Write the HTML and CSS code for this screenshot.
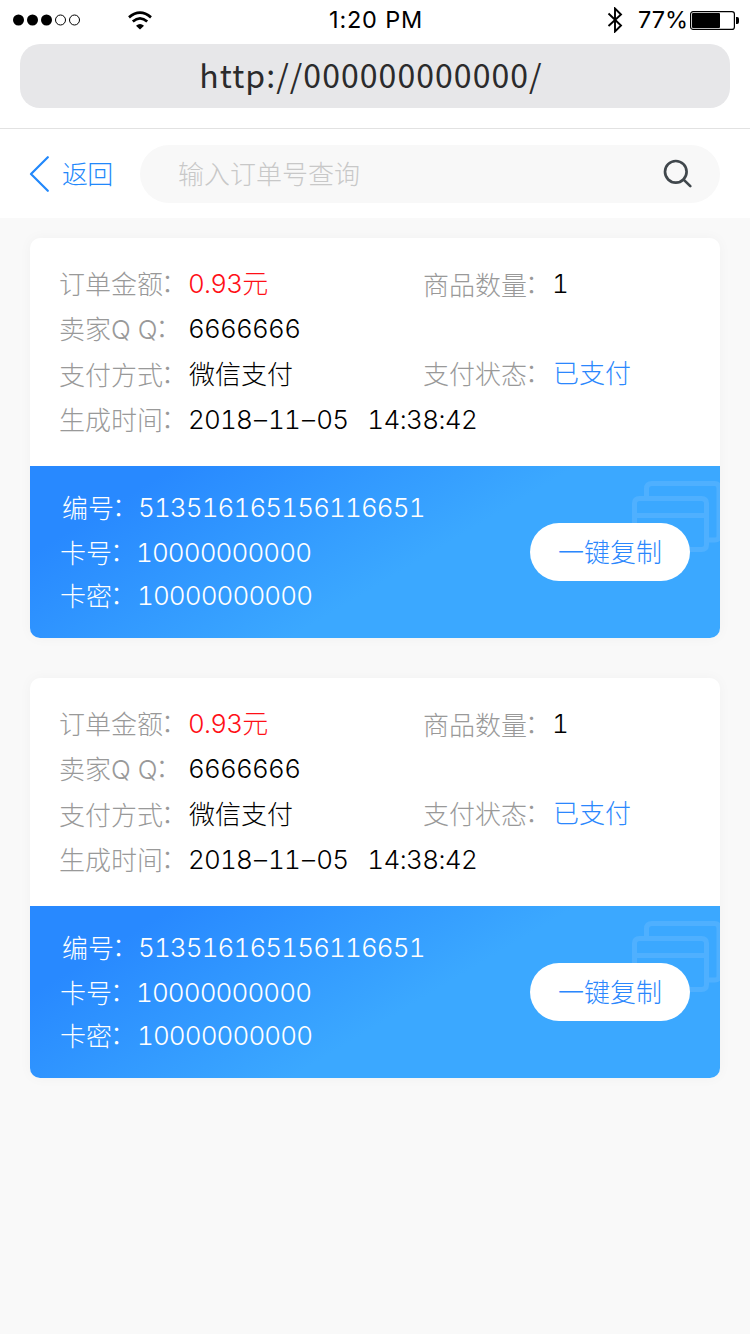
FILE: index.html
```html
<!DOCTYPE html>
<html lang="zh-CN">
<head>
<meta charset="utf-8">
<title>订单查询</title>
<link rel="stylesheet" href="styles.css">
</head>
<body>
<header class="status">
  <div class="status-left">
    <svg class="signal" viewBox="0 0 68 12"><circle cx="5.5" cy="6" r="5.5"/><circle cx="19.5" cy="6" r="5.5"/><circle cx="33.5" cy="6" r="5.5"/><g fill="none" stroke="#000"><circle cx="47.5" cy="6" r="5"/><circle cx="61.5" cy="6" r="5"/></g></svg>
    <svg class="wifi" viewBox="0 0 24 19"><path d="M8 14.7Q12 11.3 16 14.7L12 18.6Z"/><g fill="none" stroke="#000" stroke-width="2.7"><path d="M1 6.4Q12-3 23 6.4"/><path d="M4.8 10.6Q12 4.2 19.2 10.6"/></g></svg>
  </div>
  <div class="time">1:20 PM</div>
  <div class="status-right">
    <svg class="bluetooth" viewBox="0 0 16 26"><path d="M1.5 6.5 14 18.5 8 24.5V1.5L14 7.5 1.5 19" fill="none" stroke="#000" stroke-width="1.9"/></svg>
    <span class="percent">77%</span>
    <svg class="battery" viewBox="0 0 49 19"><rect x=".6" y=".6" width="43.8" height="17.8" rx="2.5" fill="none" stroke="#000" stroke-width="1.2"/><rect x="2" y="2" width="28" height="15" rx="1"/><path d="M46 6h1.2q1.8 0 1.8 2v3q0 2-1.8 2H46z"/></svg>
  </div>
</header>
<div class="address"><div class="url">http://000000000000/</div></div>
<nav class="nav">
  <a class="back"><svg class="chevron" viewBox="0 0 20 38"><path d="M18.8 2.2 2 19 18.8 35.8" fill="none" stroke="#2288fb" stroke-width="2.2" stroke-linecap="round" stroke-linejoin="round"/></svg><span>返回</span></a>
  <div class="search"><span>输入订单号查询</span><svg class="glass" viewBox="0 0 30 30"><g fill="none" stroke="#40474c" stroke-width="2.7" stroke-linecap="round"><circle cx="12.8" cy="12.8" r="10.8"/><path d="M20.6 20.6 27.3 27.1"/></g></svg></div>
</nav>
<main class="orders">
  <article class="card">
    <div class="info">
      <span class="label">订单金额<u>：</u></span><span class="value num red">0.93元</span><span class="label low">商品数量<u>：</u></span><span class="value num">1</span>
      <span class="label">卖家Q&nbsp;Q<u>：</u></span><span class="value num wide">6666666</span>
      <span class="label">支付方式<u>：</u></span><span class="value">微信支付</span><span class="label high">支付状态<u>：</u></span><span class="value blue high">已支付</span>
      <span class="label">生成时间<u>：</u></span><span class="value num wide">2018<i>–</i>11<i>–</i>05<span class="clock">14:38:42</span></span>
    </div>
    <div class="codes">
      <svg class="cards" viewBox="0 0 90 74"><g fill="none" stroke="#fff" stroke-opacity=".1" stroke-width="5"><path d="M16.5 17V10q0-5.5 5.5-5.5H85q4 0 4 5V57q0 4-4 4H79"/><path d="M9.5 19.5H71.5q5 0 5 5V65.5q0 5-5 5H9.5q-5 0-5-5V24.5q0-5 5-5ZM7 36.5H74"/></g></svg>
      <div class="code first"><span>编号<u>：</u></span><span class="num">513516165156116651</span></div>
      <div class="code second"><span>卡号<u>：</u></span><span class="num">10000000000</span></div>
      <div class="code last"><span>卡密<u>：</u></span><span class="num">10000000000</span></div>
      <button class="copy">一键复制</button>
    </div>
  </article>
  <article class="card">
    <div class="info">
      <span class="label">订单金额<u>：</u></span><span class="value num red">0.93元</span><span class="label low">商品数量<u>：</u></span><span class="value num">1</span>
      <span class="label">卖家Q&nbsp;Q<u>：</u></span><span class="value num wide">6666666</span>
      <span class="label">支付方式<u>：</u></span><span class="value">微信支付</span><span class="label high">支付状态<u>：</u></span><span class="value blue high">已支付</span>
      <span class="label">生成时间<u>：</u></span><span class="value num wide">2018<i>–</i>11<i>–</i>05<span class="clock">14:38:42</span></span>
    </div>
    <div class="codes">
      <svg class="cards" viewBox="0 0 90 74"><g fill="none" stroke="#fff" stroke-opacity=".1" stroke-width="5"><path d="M16.5 17V10q0-5.5 5.5-5.5H85q4 0 4 5V57q0 4-4 4H79"/><path d="M9.5 19.5H71.5q5 0 5 5V65.5q0 5-5 5H9.5q-5 0-5-5V24.5q0-5 5-5ZM7 36.5H74"/></g></svg>
      <div class="code first"><span>编号<u>：</u></span><span class="num">513516165156116651</span></div>
      <div class="code second"><span>卡号<u>：</u></span><span class="num">10000000000</span></div>
      <div class="code last"><span>卡密<u>：</u></span><span class="num">10000000000</span></div>
      <button class="copy">一键复制</button>
    </div>
  </article>
</main>
</body>
</html>
```
FILE: styles.css
```css
* { box-sizing: border-box; }
body { margin: 0; min-height: 1334px; background: #f9f9f9; font: 300 26px/45px Inter, "Noto Sans CJK SC", sans-serif; font-feature-settings: "tnum"; color: #000; white-space: nowrap; }
svg { display: block; flex: none; }
.status { display: grid; grid-template-columns: 1fr auto 1fr; align-items: center; height: 40px; padding: 0 11px 0 13px; background: #fff; }
.status-left, .status-right { display: flex; align-items: center; }
.status-left { gap: 47px; }
.status-right { justify-content: flex-end; }
.signal { width: 68px; height: 12px; }
.wifi { width: 24px; height: 19px; }
.time, .percent { font: 400 23.5px/40px Inter, sans-serif; }
.time { letter-spacing: .8px; }
.percent { width: 51px; }
.bluetooth { width: 16px; height: 26px; margin-right: 15px; }
.battery { width: 49px; height: 19px; margin-left: 1px; }
.address { height: 89px; padding: 4px 20px 0; background: #fff; border-bottom: 1px solid #e2e2e2; }
.url { height: 64px; border-radius: 20px; background: #e7e7e9; color: #2b2b2c; text-align: center; font: 400 32px/61px "Noto Sans CJK SC", sans-serif; letter-spacing: 1.05px; padding-right: 8px; }
.nav { display: flex; align-items: center; height: 89px; padding: 0 30px 0 29px; background: #fff; }
.back { display: flex; align-items: center; gap: 13px; width: 111px; color: #2288fb; }
.back span { padding-top: 2px; letter-spacing: -.8px; }
.chevron { width: 20px; height: 38px; }
.search { display: flex; align-items: center; justify-content: space-between; flex: 1; height: 58px; border-radius: 29px; padding: 1px 27px 0 38px; background: #f8f8f8; color: #c8c8c8; }
.search span { padding-top: 1px; }
.glass { width: 30px; height: 30px; }
.orders { display: flex; flex-direction: column; gap: 40px; padding: 20px 30px; }
.card { height: 400px; border-radius: 10px; overflow: hidden; background: #fff; box-shadow: 0 0 14px rgba(0,0,0,.035); }
.info { display: grid; grid-template-columns: 130px 234px 130px 1fr; grid-auto-rows: 45.3px; height: 228px; padding: 23px 29px 0; line-height: 45px; }
.label { color: #999; padding-top: 1px; }
.low { padding-top: 2px; }
.high { margin-top: -1px; }
.wide { grid-column: span 3; }
.num { letter-spacing: -.9px; }
.info .num { margin-left: -1px; letter-spacing: -.8px; }
.red { color: #ff0f17; }
.blue { color: #2b87fd; }
u { display: inline-block; width: 26px; margin-left: -2px; text-decoration: none; line-height: 30px; position: relative; top: -2px; }
.info i { display: inline-block; width: 16px; font-style: normal; text-align: center; }
.info .clock { margin-left: 19px; letter-spacing: -.6px; }
.codes { position: relative; height: 172px; padding: 20px 30px; color: #fff; background: linear-gradient(149deg, #2889ff 15%, #3ba8ff 56%); }
.code { display: flex; height: 44px; line-height: 45px; }
.code span:first-child { width: 76px; }
.code .num { line-height: 44px; }
.first { padding-left: 2px; }
.first span:first-child { width: 76px; }
.second { padding-top: 1px; }
.last span:first-child { width: 77px; }
.cards { position: absolute; right: 0; top: 13px; width: 90px; height: 74px; }
.copy { position: absolute; right: 30px; top: 57px; width: 160px; height: 58px; padding: 2px 0 0; border: 0; border-radius: 29px; background: #fff; color: #2b87fd; font: inherit; line-height: 56px; }
```
